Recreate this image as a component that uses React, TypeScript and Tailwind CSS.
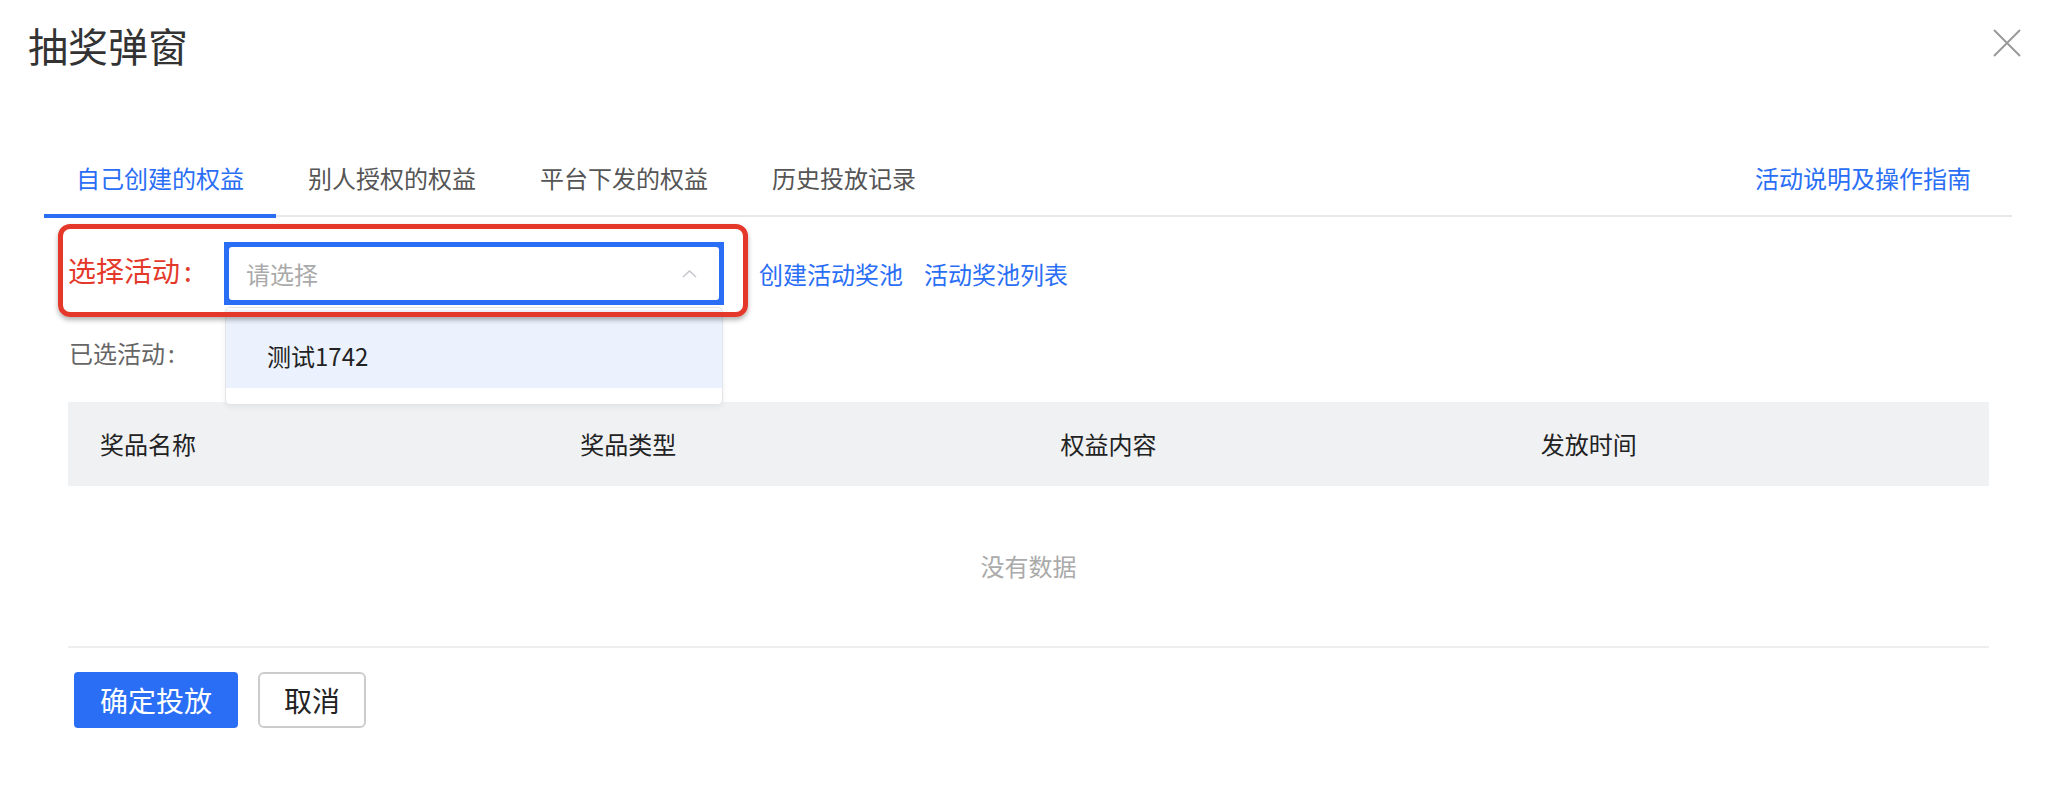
import React from "react";

const FONT = { fontFamily: '"Noto Sans CJK SC", "Noto Sans", sans-serif' };

export default function App() {
  const tabs = ["自己创建的权益", "别人授权的权益", "平台下发的权益", "历史投放记录"];
  const cols = ["奖品名称", "奖品类型", "权益内容", "发放时间"];
  return (
    <div className="w-[2052px] h-[786px] bg-white overflow-hidden" style={FONT}>
      {/* header */}
      <div className="flex items-start justify-between pl-[28px] pr-[31px] pt-[25px]">
        <div className="text-[40px] leading-[40px] text-[#333]">抽奖弹窗</div>
        <svg width="28" height="28" viewBox="0 0 28 28" className="mt-[4px]">
          <path d="M1 1 L27 27 M27 1 L1 27" stroke="#9a9a9a" strokeWidth="2" fill="none" />
        </svg>
      </div>

      {/* tabs */}
      <div className="mt-[75px] ml-[44px] mr-[40px] flex border-b-2 border-[#e6e8eb] h-[77px]">
        {tabs.map((t, i) => (
          <div
            key={t}
            className={
              i === 0
                ? "relative h-[75px] px-[32px] flex items-center text-[24px] leading-[24px] text-[#2a6ef6]"
                : "relative h-[75px] px-[32px] flex items-center text-[24px] leading-[24px] text-[#555]"
            }
          >
            {t}
            {i === 0 && <div className="absolute left-0 right-0 bottom-[-3px] h-[4px] bg-[#2a6ef6]" />}
          </div>
        ))}
        <div className="ml-auto mr-[9px] h-[75px] px-[32px] flex items-center text-[24px] leading-[24px] text-[#2a6ef6]">
          活动说明及操作指南
        </div>
      </div>

      {/* form row */}
      <div className="relative mt-[25px] ml-[68px] flex items-center h-[63px]">
        <div className="w-[156px] mb-[8px] text-[28px] leading-[28px] text-[#e4392a]">
          选择活动<span className="ml-[4px]">:</span>
        </div>
        <div className="relative w-[500px] h-[63px] bg-[#2a6ef6] p-[5px]">
          <div className="w-full h-full bg-white rounded-[3px] flex items-center justify-between pl-[17px] pr-[22px]">
            <span className="text-[24px] leading-[24px] text-[#aaa]">请选择</span>
            <svg width="15" height="8" viewBox="0 0 15 8">
              <path d="M1 7 L7.5 1 L14 7" stroke="#c6c9cf" strokeWidth="1.6" fill="none" />
            </svg>
          </div>
          {/* dropdown */}
          <div className="absolute z-10 left-[1px] top-[65px] w-[498px] h-[98px] bg-white border border-[#e2e4e8] rounded-[5px] shadow-[0_2px_6px_rgba(0,0,0,0.06)]">
            <div className="mt-[2px] h-[78px] bg-[#ebf2fd] pl-[41px] pt-[34px] text-[24px] leading-[24px] text-[#222]">
              测试1742
            </div>
          </div>
        </div>
        <div className="ml-[35px] flex gap-[21px] text-[24px] leading-[24px] text-[#2a6ef6]">
          <span>创建活动奖池</span>
          <span>活动奖池列表</span>
        </div>
        {/* red annotation */}
        <div className="absolute z-20 left-[-10px] top-[-18px] w-[690px] h-[93px] border-[5px] border-[#e4392a] rounded-[12px] shadow-[0_3px_5px_rgba(0,0,0,0.3)] pointer-events-none" />
      </div>

      {/* selected row */}
      <div className="mt-[33px] ml-[69px] text-[24px] leading-[30px] text-[#666]">
        已选活动<span className="ml-[3px]">:</span>
      </div>

      {/* table */}
      <div className="mt-[34px] ml-[68px] w-[1921px]">
        <div className="grid grid-cols-4 h-[84px] bg-[#eff1f3] items-center">
          {cols.map((c) => (
            <div key={c} className="pl-[32px] text-[24px] leading-[24px] text-[#222]">
              {c}
            </div>
          ))}
        </div>
        <div className="h-[162px] flex items-center justify-center border-b-2 border-[#eeeeee] text-[24px] leading-[24px] text-[#aaa]">
          没有数据
        </div>
      </div>

      {/* buttons */}
      <div className="mt-[24px] ml-[74px] flex gap-[20px]">
        <button className="w-[164px] h-[56px] rounded-[4px] bg-[#2a6ef6] text-white text-[28px] leading-[28px]">
          确定投放
        </button>
        <button className="w-[108px] h-[56px] rounded-[6px] border-2 border-[#cccccc] bg-white text-[#222] text-[28px] leading-[28px]">
          取消
        </button>
      </div>
    </div>
  );
}
